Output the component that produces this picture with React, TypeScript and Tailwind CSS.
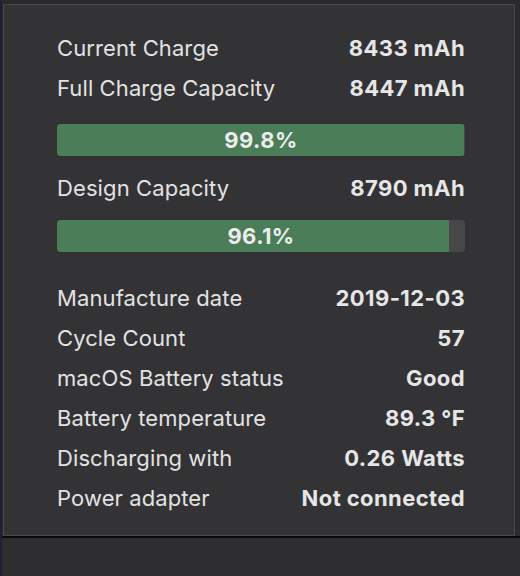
import React from "react";

const font = { fontFamily: "Inter, 'Liberation Sans', sans-serif" };

function Row({ label, value }: { label: string; value: string }) {
  return (
    <div className="flex h-[40px] items-center justify-between">
      <span className="text-[22px] tracking-[0.1px] text-[#e2e2e3]">{label}</span>
      <span className="text-[22px] font-bold tracking-[0.4px] text-[#e6e6e7]">{value}</span>
    </div>
  );
}

function Bar({ pct }: { pct: number }) {
  return (
    <div className="relative h-[32px] w-full overflow-hidden rounded-[4px] bg-[#48484b]">
      <div className="h-full bg-[#4b7d58]" style={{ width: `${pct}%` }} />
      <div className="absolute inset-0 flex items-center justify-center text-[22px] font-bold tracking-[0.4px] text-[#ececec]">
        {pct}%
      </div>
    </div>
  );
}

export default function App() {
  return (
    <div className="flex h-[576px] w-[520px] bg-[#2b2b2d]" style={font}>
      <div className="w-[2px] bg-[#1b2131]" />
      <div className="flex flex-1 flex-col">
        <div className="h-[4px] bg-[#2a2a2c]" />
        <div className="mr-[5px] ml-[1px] flex h-[532px] flex-col border border-[#48484a] bg-[#333335] pt-[23px] pr-[49px] pl-[53px]">
          <Row label="Current Charge" value="8433 mAh" />
          <Row label="Full Charge Capacity" value="8447 mAh" />
          <div className="mt-[16px]">
            <Bar pct={99.8} />
          </div>
          <div className="mt-[12px]">
            <Row label="Design Capacity" value="8790 mAh" />
          </div>
          <div className="mt-[12px]">
            <Bar pct={96.1} />
          </div>
          <div className="mt-[26px]">
            <Row label="Manufacture date" value="2019-12-03" />
            <Row label="Cycle Count" value="57" />
            <Row label="macOS Battery status" value="Good" />
            <Row label="Battery temperature" value="89.3 °F" />
            <Row label="Discharging with" value="0.26 Watts" />
            <Row label="Power adapter" value="Not connected" />
          </div>
        </div>
        <div className="h-[2px] bg-[#0a0a0a]" />
        <div className="flex-1 bg-[#2e2e30]" />
      </div>
    </div>
  );
}
